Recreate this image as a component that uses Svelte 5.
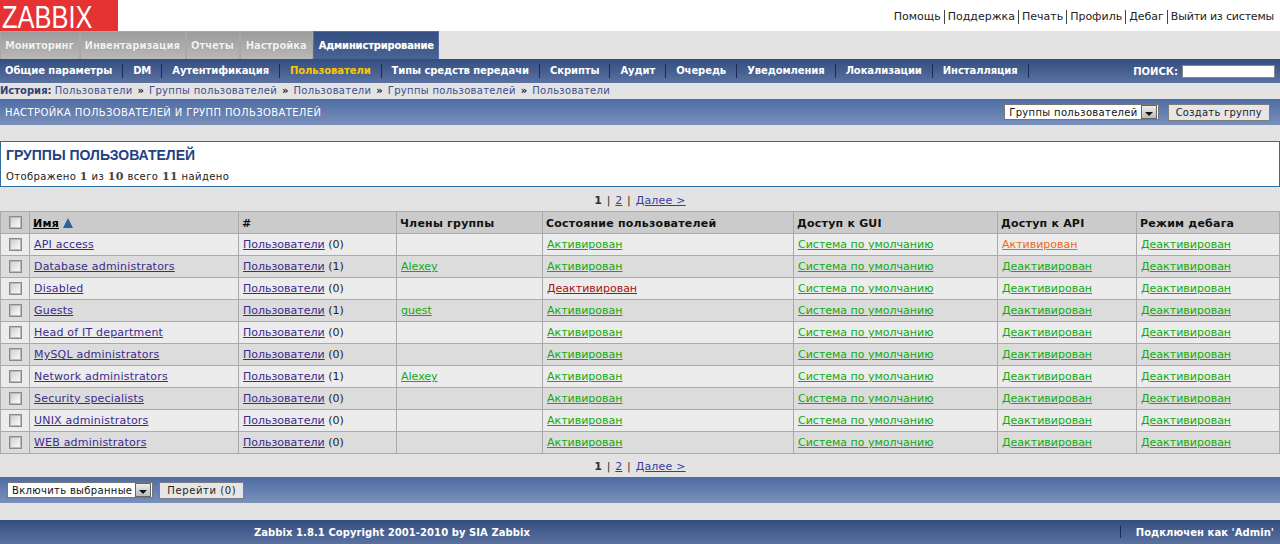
<script>
  const main = ['Мониторинг', 'Инвентаризация', 'Отчеты', 'Настройка'];
  const subs = ['Общие параметры', 'DM', 'Аутентификация', 'Пользователи', 'Типы средств передачи', 'Скрипты', 'Аудит', 'Очередь', 'Уведомления', 'Локализации', 'Инсталляция'];
  const top = ['Помощь', 'Поддержка', 'Печать', 'Профиль', 'Дебаг', 'Выйти из системы'];
  const crumbs = ['Пользователи', 'Группы пользователей', 'Пользователи', 'Группы пользователей', 'Пользователи'];
  const rows = [
    { name: 'API access', n: 0, member: '', st: 'Активирован', stc: 'green', api: 'Активирован', apic: 'orange' },
    { name: 'Database administrators', n: 1, member: 'Alexey', st: 'Активирован', stc: 'green', api: 'Деактивирован', apic: 'green' },
    { name: 'Disabled', n: 0, member: '', st: 'Деактивирован', stc: 'red', api: 'Деактивирован', apic: 'green' },
    { name: 'Guests', n: 1, member: 'guest', st: 'Активирован', stc: 'green', api: 'Деактивирован', apic: 'green' },
    { name: 'Head of IT department', n: 0, member: '', st: 'Активирован', stc: 'green', api: 'Деактивирован', apic: 'green' },
    { name: 'MySQL administrators', n: 0, member: '', st: 'Активирован', stc: 'green', api: 'Деактивирован', apic: 'green' },
    { name: 'Network administrators', n: 1, member: 'Alexey', st: 'Активирован', stc: 'green', api: 'Деактивирован', apic: 'green' },
    { name: 'Security specialists', n: 0, member: '', st: 'Активирован', stc: 'green', api: 'Деактивирован', apic: 'green' },
    { name: 'UNIX administrators', n: 0, member: '', st: 'Активирован', stc: 'green', api: 'Деактивирован', apic: 'green' },
    { name: 'WEB administrators', n: 0, member: '', st: 'Активирован', stc: 'green', api: 'Деактивирован', apic: 'green' }
  ];
</script>

<div class="page">
  <header class="top">
    <div class="logo"><span>ZABBIX</span></div>
    <nav class="toplinks">
      {#each top as t, i}<span class="tl" class:first={i === 0} class:last={i === top.length - 1}>{t}</span>{/each}
    </nav>
  </header>

  <nav class="mainnav">
    {#each main as m}<span class="mtab">{m}</span>{/each}
    <span class="mtab active">Администрирование</span>
  </nav>

  <nav class="subnav">
    {#each subs as s}
      <span class="sub" class:cur={s === 'Пользователи'}>{s}</span>
    {/each}
    <span class="search"><b>ПОИСК:</b><span class="sbox"></span></span>
  </nav>

  <div class="history">
    <b>История:</b>
    {#each crumbs as c, i}
      <span class="crumb">{c}</span>{#if i < crumbs.length - 1}<span class="sep">»</span>{/if}
    {/each}
  </div>

  <div class="bar titlebar">
    <span class="bartitle">НАСТРОЙКА ПОЛЬЗОВАТЕЛЕЙ И ГРУПП ПОЛЬЗОВАТЕЛЕЙ</span>
    <span class="tools">
      <span class="select"><span class="selval">Группы пользователей</span><span class="arrow"><svg width="8" height="4" viewBox="0 0 8 4"><path d="M0 0h8L4 4z" fill="#111"/></svg></span></span>
      <span class="btn create">Создать группу</span>
    </span>
  </div>

  <section class="box">
    <h2>ГРУППЫ ПОЛЬЗОВАТЕЛЕЙ</h2>
    <div class="found">Отображено <b>1</b> из <b>10</b> всего <b>11</b> найдено</div>
  </section>

  <div class="pager first"><b>1</b> <i>|</i> <a>2</a> <i>|</i> <a class="next">Далее &gt;</a></div>

  <table>
    <colgroup>
      <col style="width:29px" /><col style="width:209px" /><col style="width:158px" /><col style="width:146px" /><col style="width:251px" /><col style="width:204px" /><col style="width:139px" /><col />
    </colgroup>
    <thead>
      <tr>
        <th class="chk"><span class="cb"></span></th>
        <th><span class="sorted">Имя</span> <svg class="sorticon" width="10" height="10" viewBox="0 0 10 10"><path d="M5 0L10 10H0z" fill="#2a62a2"/></svg></th>
        <th>#</th>
        <th>Члены группы</th>
        <th>Состояние пользователей</th>
        <th>Доступ к GUI</th>
        <th>Доступ к API</th>
        <th>Режим дебага</th>
      </tr>
    </thead>
    <tbody>
      {#each rows as r, i}
        <tr class:odd={i % 2 === 0}>
          <td class="chk"><span class="cb"></span></td>
          <td><a class="lnk name">{r.name}</a></td>
          <td><a class="lnk">Пользователи</a> ({r.n})</td>
          <td>{#if r.member}<a class="green">{r.member}</a>{/if}</td>
          <td><a class={r.stc}>{r.st}</a></td>
          <td><a class="green">Система по умолчанию</a></td>
          <td><a class={r.apic}>{r.api}</a></td>
          <td><a class="green">Деактивирован</a></td>
        </tr>
      {/each}
    </tbody>
  </table>

  <div class="pager second"><b>1</b> <i>|</i> <a>2</a> <i>|</i> <a class="next">Далее &gt;</a></div>

  <div class="bar actionbar">
    <span class="select wide"><span class="selval">Включить выбранные</span><span class="arrow"><svg width="8" height="4" viewBox="0 0 8 4"><path d="M0 0h8L4 4z" fill="#111"/></svg></span></span>
    <span class="btn go">Перейти (0)</span>
  </div>

  <footer class="foot">
    <span class="copy">Zabbix 1.8.1 Copyright 2001-2010 by SIA Zabbix</span>
    <span class="conn"><i></i>Подключен как 'Admin'</span>
  </footer>
</div>

<style>
  :global(body) { margin: 0; background: #e3e3e3; }
  .page { width: 1280px; height: 544px; overflow: hidden; font: 11px "DejaVu Sans", Verdana, sans-serif; color: #111; background: #e3e3e3; }
  .top { height: 31px; background: #fff; display: flex; justify-content: space-between; }
  .logo { width: 118px; height: 31px; background: #e53333; color: #fff; font: 31px/31px "Liberation Sans", sans-serif; padding: 3px 0 0 2px; box-sizing: border-box; display: flex; align-items: center; }
  .logo span { display: inline-block; transform: scaleX(.82); transform-origin: left center; }
  .toplinks { display: flex; align-items: center; padding: 2px 3px 0 0; font-size: 11px; color: #222; }
  .tl { padding: 0 3px; border-left: 1px solid #444; line-height: 14px; }
  .tl.first { border-left: 0; }
  .tl.last { letter-spacing: -.2px; }
  .mainnav { height: 28px; display: flex; background: #e3e3e3; }
  .mtab { box-sizing: border-box; height: 28px; display: flex; align-items: center; padding: 0 5px 0 4px; background: linear-gradient(#9c9c9c, #b8b8b8); border: 1px solid #a8a8a8; border-width: 1px 1px 0 1px; color: #f2f2f2; font-weight: bold; font-size: 10px; text-shadow: 0 0 1px #888; }
  .mtab:nth-child(1) { letter-spacing: -.12px; }
  .mtab:nth-child(4) { letter-spacing: -.05px; padding-left: 5px; }
  .mtab.active { background: linear-gradient(#344e82, #4a6394); border-color: #5a6ca8; color: #fff; letter-spacing: -.2px; padding: 0 4px 0 5px; }
  .subnav { height: 24px; background: linear-gradient(#334d80, #5b72a0); display: flex; align-items: center; padding-left: 5px; color: #fff; font-weight: bold; font-size: 10px; }
  .sub { padding-right: 10px; margin-right: 10px; border-right: 1px solid #1c2c50; line-height: 14px; letter-spacing: -.08px; }
  .sub.cur { color: #ffc600; }
  .search { margin-left: auto; display: flex; align-items: center; gap: 4px; padding-right: 5px; }
  .sbox { width: 91px; height: 11px; background: #fff; border: 1px solid #888; display: block; }
  .history { height: 16px; line-height: 15px; font-size: 10px; color: #2e3f7a; white-space: nowrap; }
  .history b { color: #333f70; }
  .crumb { color: #3b4e8e; letter-spacing: .3px; }
  .sep { font-weight: bold; margin: 0 5px 0 5px; color: #222; }
  .bar { background: linear-gradient(#4d6ca6, #7a90ba); display: flex; align-items: center; box-sizing: border-box; }
  .titlebar { height: 26px; justify-content: space-between; padding: 0 10px 0 5px; }
  .bartitle { color: #fff; font-size: 10px; letter-spacing: .38px; }
  .tools { display: flex; align-items: center; gap: 9px; }
  .select { display: inline-flex; height: 16px; background: #fff; align-items: center; box-sizing: border-box; border: 1px solid #777; padding-right: 1px; font-size: 10px; color: #111; letter-spacing: .32px; }
  .selval { padding: 0 3px 0 4px; white-space: nowrap; }
  .arrow { width: 16px; height: 14px; background: linear-gradient(#eee, #bbb); border: 1px solid #666; box-sizing: border-box; display: flex; align-items: flex-end; justify-content: center; padding-bottom: 2px; }
  .btn { display: inline-flex; height: 17px; box-sizing: border-box; align-items: center; background: #e6e6e6; border: 1px solid #7d7d7d; padding: 0 7px; font-size: 10px; color: #222; letter-spacing: .25px; }
  .btn.go { letter-spacing: .6px; }
  .box { margin-top: 16px; height: 46px; box-sizing: border-box; background: #fff; border: 1px solid #2f6ea0; padding: 5px 5px 0; }
  h2 { margin: 0; font: bold 14px/16px "Liberation Sans", sans-serif; color: #23417f; }
  .found { margin-top: 7px; font-size: 10px; color: #222; letter-spacing: .4px; }
  .found b { font-family: "DejaVu Serif", serif; font-size: 11px; color: #444; }
  .pager { text-align: center; font-size: 11px; height: 18px; line-height: 18px; color: #333; }
  .pager i { font-style: normal; margin: 0 1.3px; }
  .pager a { color: #3b3b9e; text-decoration: underline; }
  .pager a.next { letter-spacing: .2px; }
  .pager.first { margin-top: 5px; margin-bottom: 1px; }
  .pager.second { margin-top: 4px; margin-bottom: 1px; }
  table { table-layout: fixed; width: 1280px; border-collapse: collapse; border: 1px solid #aaa; }
  th { height: 20px; background: #cbcbcb; text-align: left; padding: 1px 3px 0; font-size: 11px; letter-spacing: .22px; border: 1px solid #aaa; color: #111; }
  td { height: 21px; padding: 0 4px; border: 1px solid #aaa; background: #dcdcdc; white-space: nowrap; overflow: hidden; color: #222; }
  tr.odd td { background: #ececec; }
  td.chk, th.chk { padding: 0; text-align: center; }
  .cb { display: inline-block; width: 11px; height: 11px; border: 1px solid #8a8a8a; box-shadow: inset 0 0 0 1px #bbb; background: linear-gradient(135deg, #ccc, #fff); vertical-align: middle; }
  .sorted { text-decoration: underline; color: #000; }
  .sorticon { vertical-align: -1px; }
  a { text-decoration: underline; }
  .lnk { color: #3d2a8c; }
  .name { letter-spacing: .2px; }
  .green { color: #11aa11; }
  .orange { color: #ee6a10; }
  .red { color: #aa1111; }
  .actionbar { height: 26px; padding: 0 0 0 7px; gap: 6px; }
  .foot { margin-top: 17px; height: 24px; background: linear-gradient(#334d80, #5b72a0); color: #fff; font-weight: bold; font-size: 10px; letter-spacing: .06px; display: flex; align-items: center; justify-content: space-between; padding: 0 6px 0 254px; box-sizing: border-box; }
  .conn { display: flex; align-items: center; }
  .conn i { display: block; width: 1px; height: 12px; background: #1c2c50; margin-right: 15px; }
</style>
